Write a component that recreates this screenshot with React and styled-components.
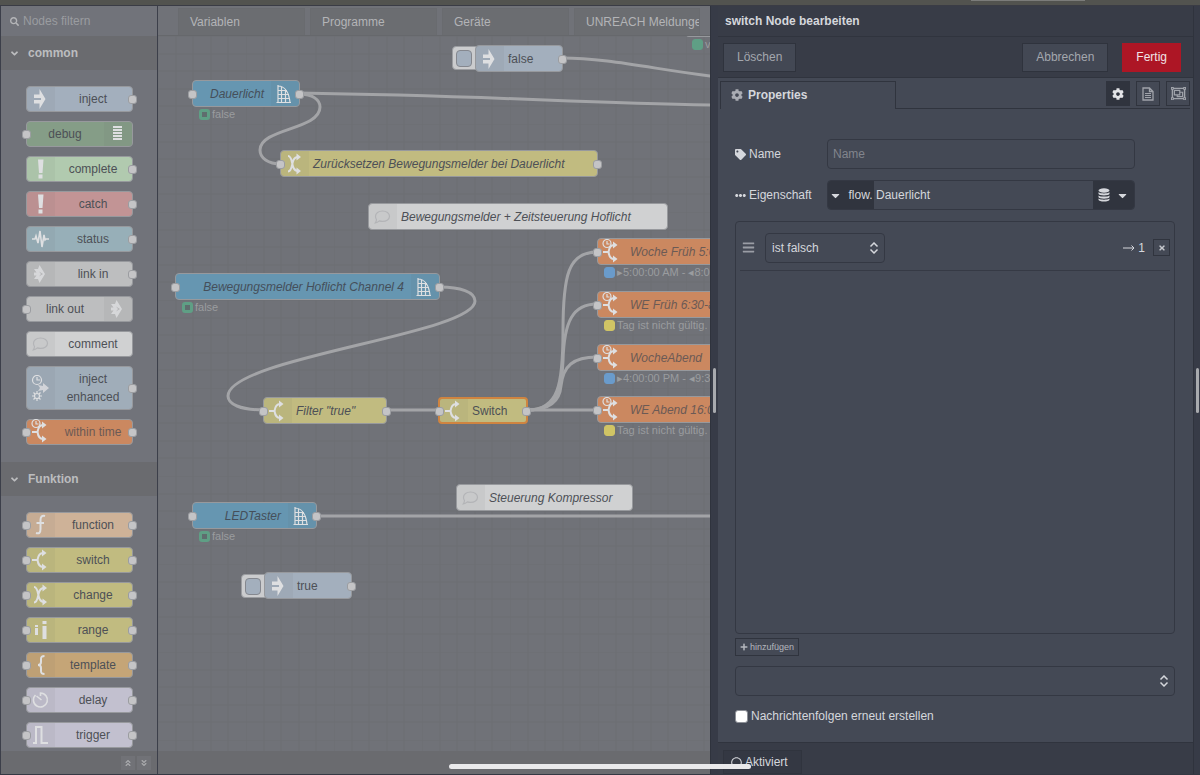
import React from 'react'
import styled, { createGlobalStyle } from 'styled-components'
import {
  FaSearch, FaAngleDown, FaAngleDoubleUp, FaAngleDoubleDown, FaCog, FaTag, FaEllipsisH,
  FaCaretDown, FaBars, FaPlus, FaTimes, FaRegObjectGroup, FaRegCircle,
} from 'react-icons/fa'

const GlobalStyle = createGlobalStyle`
  * { box-sizing: border-box; }
  body {
    margin: 0;
    background: #383c47;
    font-family: "Liberation Sans", Arial, sans-serif;
    font-size: 12px;
  }
  button, input, select { font: inherit; color: inherit; margin: 0; }
`

const Page = styled.div`
  display: flex;
  flex-direction: column;
  height: 100vh;
  min-height: 600px;
  overflow: hidden;
`
const TopStrip = styled.div`
  display: flex;
  justify-content: flex-end;
  flex: none;
  height: 6px;
  padding-right: 115px;
  background: #52534f;
  border-bottom: 1px solid #3a3c45;
`
const StripMark = styled.div`
  width: 114px;
  height: 1px;
  background: #7b7c7a;
`
const Main = styled.div`
  display: flex;
  flex: 1;
  min-height: 0;
  border-bottom: 1px solid #343843;
`

/* palette */
const Palette = styled.aside`
  display: flex;
  flex-direction: column;
  flex: none;
  width: 158px;
  background: #71737a;
  border-left: 1px solid #3c3f4a;
  border-right: 1px solid #3c3f4a;
`
const Search = styled.label`
  display: flex;
  align-items: center;
  gap: 4px;
  height: 30px;
  padding-left: 9px;
  color: #b4b5b8;
`
const SearchInput = styled.input`
  width: 120px;
  padding: 0;
  border: 0;
  outline: 0;
  background: transparent;
  &::placeholder { color: #9a9ca0; opacity: 1; }
`
const CategoryTitle = styled.button`
  display: flex;
  align-items: center;
  gap: 8px;
  width: 100%;
  height: 34px;
  padding: 0 0 0 8px;
  border: 0;
  background: #6a6b6f;
  color: #bcbdbf;
  font-weight: bold;
`
const CategoryNodes = styled.div`
  display: flex;
  flex-direction: column;
  align-items: center;
  gap: 9px;
  padding: 16px 0 17px;
`
const PaletteScroll = styled.div`
  flex: 1;
  min-height: 0;
  overflow: hidden;
`
const Footer = styled.div`
  display: flex;
  flex: none;
  align-items: center;
  justify-content: flex-end;
  gap: 2px;
  height: 23px;
  padding-right: 6px;
  background: #6a6b6f;
`
const TinyButton = styled.button`
  display: flex;
  align-items: center;
  justify-content: center;
  width: 14px;
  height: 14px;
  padding: 0;
  border: 0;
  background: #717277;
  color: #a9aaad;
  font-size: 8px;
`

/* nodes */
const NodeBox = styled.div`
  position: relative;
  display: flex;
  flex-direction: ${p => (p.$right ? 'row-reverse' : 'row')};
  width: 107px;
  height: ${p => (p.$tall ? '44px' : '26px')};
  border: 1px solid #97999d;
  border-radius: 4px;
  background: ${p => p.$color};
  color: ${p => p.$ink || '#4d5056'};
`
const IconBox = styled.div`
  display: flex;
  align-items: center;
  justify-content: center;
  flex: none;
  width: 28px;
  background: ${p => (p.$plain ? 'none' : 'rgba(80, 80, 80, 0.06)')};
`
const NodeLabel = styled.div`
  flex: 1;
  align-self: center;
  line-height: 18px;
  text-align: center;
`
const Port = styled.span`
  position: absolute;
  top: calc(50% - 4px);
  ${p => (p.$out ? 'right' : 'left')}: -5px;
  width: 9px;
  height: 9px;
  border: 1px solid #9b9da1;
  border-radius: 3px;
  background: #c4c4c6;
`
const FlowNodeBox = styled(NodeBox)`
  position: absolute;
  left: ${p => p.$x}px;
  top: ${p => p.$y}px;
  width: ${p => p.$w}px;
  height: 27px;
  border-color: ${p => (p.$selected ? '#cf8440' : '#97999d')};
  border-width: ${p => (p.$selected ? '2px' : '1px')};
`
const FlowLabel = styled.div`
  flex: 1;
  align-self: center;
  padding: ${p => (p.$end ? '0 7px' : '0 4px')};
  text-align: ${p => (p.$end ? 'right' : 'left')};
  font-style: ${p => (p.$italic ? 'italic' : 'normal')};
  white-space: nowrap;
`
const Status = styled.div`
  position: absolute;
  left: 6px;
  top: 27px;
  display: flex;
  align-items: center;
  gap: 2px;
  color: #9a9c9f;
  font-size: 11px;
  line-height: 13px;
  white-space: nowrap;
`
const StatusDot = styled.span`
  width: 11px;
  height: 11px;
  border: ${p => (p.$ring ? 3 : 1)}px solid ${p => p.$color};
  border-radius: 3px;
  background: ${p => (p.$ring ? '#5f6d6e' : p.$color)};
`
const InjectButton = styled.button`
  position: absolute;
  left: ${p => p.$x}px;
  top: ${p => p.$y}px;
  width: 28px;
  height: 24px;
  padding: 2px 3px;
  border: 1px solid #9b9da1;
  border-radius: 4px;
  background: #cbccce;
`
const InjectFace = styled.span`
  display: block;
  width: 16px;
  height: 17px;
  border: 1px solid #85888f;
  border-radius: 4px;
  background: #a3afbd;
`

/* workspace */
const Workspace = styled.main`
  display: flex;
  flex-direction: column;
  flex: 1;
  min-width: 0;
  background: #707278;
`
const TabBar = styled.div`
  display: flex;
  align-items: flex-end;
  gap: 5px;
  flex: none;
  height: 30px;
  padding: 0 10px 0 20px;
  overflow: hidden;
  border-bottom: 1px solid #66686c;
`
const FlowTab = styled.button`
  flex: 0 0 127px;
  height: 27px;
  padding: 0 0 0 11px;
  border: 1px solid #696b6f;
  border-bottom: 0;
  background: #6b6d71;
  color: #b3b4b7;
  text-align: left;
  white-space: nowrap;
  overflow: hidden;
  &:last-child { flex: 0 1 127px; }
`
const Canvas = styled.div`
  position: relative;
  flex: 1;
  min-height: 0;
  overflow: hidden;
`
const Wires = styled.svg`
  display: block;
  width: 100%;
  height: 100%;
`

/* tray */
const Separator = styled.div`
  display: flex;
  align-items: center;
  justify-content: center;
  flex: none;
  width: ${p => p.$w}px;
  border-left: 1px solid #2f333d;
  background: #373b47;
`
const Grip = styled.span`
  width: 3px;
  height: 45px;
  border-radius: 2px;
  background: #a8aaae;
`
const Tray = styled.section`
  display: flex;
  flex-direction: column;
  flex: none;
  width: 475px;
  background: #444955;
  color: #d5d7dc;
`
const TrayTitle = styled.h2`
  flex: none;
  height: 31px;
  margin: 0;
  padding-left: 7px;
  border-bottom: 1px solid #30343e;
  background: #383c47;
  font-size: 12px;
  line-height: 30px;
`
const TrayButtons = styled.div`
  display: flex;
  align-items: center;
  flex: none;
  gap: 14px;
  height: 41px;
  padding: 0 12px 0 5px;
  border-bottom: 1px solid #30343e;
  background: #383c47;
`
const Button = styled.button`
  height: 29px;
  padding: 0 13px;
  border: 1px solid ${p => (p.$primary ? '#ad1625' : '#2f333d')};
  background: ${p => (p.$primary ? '#ad1625' : '#434854')};
  color: ${p => (p.$primary ? '#f0e4e6' : '#a4a7ae')};
  &:first-child { margin-right: auto; }
`
const TrayTabs = styled.div`
  display: flex;
  flex: none;
  gap: 6px;
  height: 31px;
  padding: 3px 3px 0 2px;
`
const PropertiesTab = styled.button`
  display: flex;
  align-items: center;
  gap: 5px;
  width: 176px;
  padding: 0 0 2px 10px;
  border: 1px solid #30343e;
  border-bottom: 0;
  background: none;
  font-weight: bold;
  svg { color: #a9acb3; }
`
const TabRest = styled.div`
  display: flex;
  flex: 1;
  justify-content: flex-end;
  gap: 6px;
  margin-left: -6px;
  border-bottom: 1px solid #30343e;
`
const TabIcon = styled.button`
  display: flex;
  align-items: center;
  justify-content: center;
  width: 24px;
  height: 25px;
  padding: 0;
  border: 1px solid #30343e;
  background: ${p => (p.$active ? '#30343e' : 'none')};
  color: ${p => (p.$active ? '#e3e4e7' : '#a0a3aa')};
`
const Form = styled.form`
  display: flex;
  flex-direction: column;
  flex: 1;
  min-height: 0;
  gap: 11px;
  padding: 30px 18px 17px 17px;
`
const FormRow = styled.div`
  display: flex;
  align-items: center;
  justify-content: space-between;
  width: calc(100% - 40px);
  height: 30px;
`
const FieldLabel = styled.label`
  display: flex;
  align-items: center;
  gap: 3px;
`
const TextInput = styled.input`
  width: 308px;
  height: 30px;
  padding: 0 5px;
  border: 1px solid #343843;
  border-radius: 4px;
  outline: 0;
  background: none;
  &::placeholder { color: #82858d; opacity: 1; }
`
const TypedInput = styled.div`
  display: flex;
  width: 308px;
  height: 30px;
  border: 1px solid #343843;
  border-radius: 4px;
  overflow: hidden;
`
const TypeButton = styled.button`
  display: flex;
  align-items: center;
  justify-content: center;
  gap: 6px;
  flex: none;
  width: ${p => p.$w}px;
  padding: 0;
  border: 0;
  background: #30343e;
`
const TypedValue = styled.input`
  flex: 1;
  min-width: 0;
  padding: 0 2px;
  border: 0;
  outline: 0;
  background: none;
`
const Rules = styled.ul`
  flex: 1;
  min-height: 0;
  margin: 0;
  padding: 3px 4px;
  border: 1px solid #343843;
  border-radius: 4px;
  list-style: none;
`
const Rule = styled.li`
  display: flex;
  align-items: center;
  height: 46px;
  padding-left: 2px;
  border-bottom: 1px solid #363a45;
  color: #9a9da5;
`
const RuleTarget = styled.span`
  display: flex;
  align-items: center;
  gap: 3px;
  margin: 0 8px 0 auto;
  color: #d5d7dc;
`
const RemoveButton = styled.button`
  display: flex;
  align-items: center;
  justify-content: center;
  width: 17px;
  height: 17px;
  padding: 0;
  border: 1px solid #30343e;
  background: none;
  color: #c6c8cd;
  font-size: 8px;
`
const SelectWrap = styled.div`
  display: grid;
  align-items: center;
  flex: none;
  width: ${p => p.$w};
  margin-left: ${p => (p.$rule ? '10px' : '0')};
  color: #d5d7dc;
  > * { grid-area: 1 / 1; }
  > svg { justify-self: end; margin-right: 6px; pointer-events: none; }
`
const Select = styled.select`
  width: 100%;
  height: 30px;
  padding: 0 6px;
  border: 1px solid #343843;
  border-radius: 4px;
  appearance: none;
  outline: 0;
  background: none;
`
const AddRow = styled.div`
  display: flex;
  flex: none;
  margin: -7px 0 -1px;
`
const AddButton = styled.button`
  display: flex;
  align-items: center;
  gap: 2px;
  height: 18px;
  padding: 0 4px;
  border: 1px solid #30343e;
  background: none;
  color: #b4b7bd;
  font-size: 9px;
`
const CheckLabel = styled.label`
  display: flex;
  align-items: center;
  gap: 3px;
  height: 18px;
`
const Check = styled.input`
  appearance: none;
  width: 13px;
  height: 13px;
  border: 1px solid #8d9097;
  border-radius: 3px;
  background: #fff;
`
const TrayFooter = styled.div`
  flex: none;
  height: 32px;
  padding: 7px 5px 0;
  border-top: 1px solid #30343e;
  background: #383c47;
`
const EnableButton = styled.button`
  display: flex;
  align-items: center;
  gap: 3px;
  width: 79px;
  height: 24px;
  padding: 0 7px;
  border: 1px solid #30343e;
  background: #343843;
`
const HomeBar = styled.div`
  position: fixed;
  left: 50%;
  bottom: 6px;
  width: 302px;
  height: 5px;
  margin-left: -151px;
  border-radius: 3px;
  background: #e9e9eb;
`

const line = { fill: 'none', stroke: '#dedfe1', strokeWidth: 2 }
const thin = { fill: 'none', stroke: '#dedfe1', strokeWidth: 1.2 }

const fork = (
  <>
    <path {...line} d="M5 13h5M16 6c-4 0-5 3.500-5.500 7 .5 3.500 1.500 7 5.500 7" />
    <path d="M15 2.500l4.500 3.500-4.500 3.500zM15 16.500l4.500 3.500-4.500 3.500z" />
  </>
)
const clock = (
  <>
    <circle {...thin} cx="9" cy="4.500" r="4" />
    <path {...thin} d="M9 2v3h2.500" />
  </>
)

const icons = {
  inject: <path d="M7 8.500h5.500V3l6 10-6 10v-5.500H7V14h7v-2H7z" />,
  debug: <path d="M9 5h9v2H9zM9 8h9v2H9zM9 11h9v2H9zM9 14h9v2H9zM9 17h9v2H9z" />,
  alert: <path d="M11 3.500h5.500L15.500 17H12zM11.500 18.500h4v4h-4z" />,
  status: <path {...thin} strokeWidth="1.600" d="M5 13h3l1-3 2 7 2-12 2 16 2-12 1 5 1-1h3" />,
  link: <path opacity=".8" d="M7 8h4l1.500-4L18 13l-5.500 9L11 18H7l2.500-3.500H7v-3h2.500zM12 10.500l2 2.500-2 2.500 4-2.500z" />,
  comment: <path fill="none" stroke="#b3b4b7" strokeWidth="1.200" d="M13.500 7c4 0 7 2.200 7 5.200s-3 5.200-7 5.200c-1.200 0-2.200-.2-3.200-.5-1 .9-2.300 1.700-4 1.900.8-1 1.200-1.900 1.200-3.200-.7-1-1-2.100-1-3.400 0-3 3-5.200 7-5.200z" />,
  enhanced: (
    <>
      <circle {...thin} cx="10" cy="5" r="4.500" />
      <path {...thin} d="M10 2v3h3" />
      <path d="M11 10l5 1V8l6 5-6 5v-3l-5 1 2-3z" opacity=".8" />
      <circle {...thin} cx="10" cy="21" r="2.500" />
      <path {...thin} d="M10 16v2M10 24v2M5 21h2M13 21h2M6.500 17.500l1.500 1.500M12 23l1.500 1.500M6.500 24.500L8 23M12 19l1.500-1.500" />
    </>
  ),
  within: <>{fork}{clock}</>,
  switch: fork,
  change: (
    <>
      <path {...line} d="M7 5c6 0 2 15 10 15M7 20.500c6 0 2-14.500 10-14.500" />
      <path d="M15.500 2.500L20 6l-4.500 3.500zM15.500 16.500L20 20l-4.500 3.500z" />
    </>
  ),
  fn: <path {...line} d="M18 4c-3-1-4.500 1-4.500 4v9c0 4-1.500 5-4.500 4M9.500 11H17" />,
  range: <path d="M8 8h3v2H8zM8 11h3v7H8zM15.500 4h4v3h-4zM15.500 9h4v13h-4z" />,
  template: <path {...line} d="M17.500 4c-3 0-3.500 1-3.500 3v3c0 2-1 3-3 3 2 0 3 1 3 3v3c0 2 .5 3 3.500 3" />,
  delay: <path {...line} strokeWidth="1.600" d="M8.500 8a7 7 0 1 0 5-2v3M9.500 9l5 4" />,
  trigger: <path {...line} d="M6 21h3V5h5.500v16H21" />,
  device: <path {...thin} d="M7 4v18M7 5c7 0 11 7 12 16.500M5.500 21.500h14.500M10.500 6v15.500M14.500 8v13.500M7 9.500h9M7 13.500h11M7 17.500h11" />,
}

const Glyph = ({ name }) => (
  <svg width="28" height="26" viewBox="0 0 28 26" fill="#dedfe1" aria-hidden="true">
    {icons[name]}
  </svg>
)

const UpDown = () => (
  <svg width="10" height="12" viewBox="0 0 10 12" fill="none" stroke="#d5d7dc" strokeWidth="1.500">
    <path d="M1.500 4.500L5 1l3.500 3.500M1.500 7.500L5 11l3.500-3.500" />
  </svg>
)

const YELLOW = '#c1bb80'
const ORANGE = '#cb8860'
const BLUE = '#6696b1'

const common = [
  { label: 'inject', icon: 'inject', color: '#a3afbd', out: true },
  { label: 'debug', icon: 'debug', color: '#859d87', in: true, right: true },
  { label: 'complete', icon: 'alert', color: '#b1caaf', out: true },
  { label: 'catch', icon: 'alert', color: '#c29495', out: true },
  { label: 'status', icon: 'status', color: '#97afb8', out: true },
  { label: 'link in', icon: 'link', color: '#bdbebf', out: true },
  { label: 'link out', icon: 'link', color: '#bdbebf', in: true, right: true },
  { label: 'comment', icon: 'comment', color: '#d0d1d2' },
  { label: 'inject enhanced', icon: 'enhanced', color: '#a0adb9', out: true, tall: true },
  { label: 'within time', icon: 'within', color: ORANGE, in: true, out: true, ink: '#6b5a55' },
]
const funktion = [
  { label: 'function', icon: 'fn', color: '#ceb298' },
  { label: 'switch', icon: 'switch', color: YELLOW },
  { label: 'change', icon: 'change', color: YELLOW },
  { label: 'range', icon: 'range', color: YELLOW },
  { label: 'template', icon: 'template', color: '#c5a577' },
  { label: 'delay', icon: 'delay', color: '#c2c0cf' },
  { label: 'trigger', icon: 'trigger', color: '#c2c0cf' },
].map(n => ({ ...n, in: true, out: true }))

const flowNodes = [
  { x: 527, y: -26, w: 120, color: '#97999d', label: '', status: ['#5f9f85', 'verbunden'] },
  { x: 317, y: 9, w: 88, color: '#a3afbd', icon: 'inject', label: 'false', out: true },
  { x: 34, y: 44, w: 108, color: BLUE, icon: 'device', label: 'Dauerlicht', italic: true, right: true, in: true, out: true, ink: '#454f5a', status: ['#5f9f85', 'false', true] },
  { x: 122, y: 114, w: 318, color: YELLOW, icon: 'change', label: 'Zurücksetzen Bewegungsmelder bei Dauerlicht', italic: true, in: true, out: true },
  { x: 210, y: 167, w: 300, color: '#d0d1d2', icon: 'comment', label: 'Bewegungsmelder + Zeitsteuerung Hoflicht', italic: true },
  { x: 17, y: 237, w: 265, color: BLUE, icon: 'device', label: 'Bewegungsmelder Hoflicht Channel 4', italic: true, right: true, in: true, out: true, ink: '#454f5a', status: ['#5f9f85', 'false', true] },
  { x: 105, y: 361, w: 124, color: YELLOW, icon: 'switch', label: 'Filter "true"', italic: true, in: true, out: true },
  { x: 280, y: 361, w: 90, color: YELLOW, icon: 'switch', label: 'Switch', in: true, out: true, selected: true },
  { x: 439, y: 202, w: 190, color: ORANGE, icon: 'within', label: 'Woche Früh 5:00-8:00', italic: true, in: true, ink: '#6b5a55', status: ['#6a9bcb', '▸5:00:00 AM - ◂8:00:00 AM'] },
  { x: 439, y: 255, w: 190, color: ORANGE, icon: 'within', label: 'WE Früh 6:30-8:00', italic: true, in: true, ink: '#6b5a55', status: ['#d0c465', 'Tag ist nicht gültig.'] },
  { x: 439, y: 308, w: 190, color: ORANGE, icon: 'within', label: 'WocheAbend', italic: true, in: true, ink: '#6b5a55', status: ['#6a9bcb', '▸4:00:00 PM - ◂9:30:00 PM'] },
  { x: 439, y: 360, w: 190, color: ORANGE, icon: 'within', label: 'WE Abend 16:00-21:30', italic: true, in: true, ink: '#6b5a55', status: ['#d0c465', 'Tag ist nicht gültig.'] },
  { x: 34, y: 466, w: 125, color: BLUE, icon: 'device', label: 'LEDTaster', italic: true, right: true, in: true, out: true, ink: '#454f5a', status: ['#5f9f85', 'false', true] },
  { x: 298, y: 448, w: 177, color: '#d0d1d2', icon: 'comment', label: 'Steuerung Kompressor', italic: true },
  { x: 106, y: 536, w: 88, color: '#a3afbd', icon: 'inject', label: 'true', out: true },
]

const wires = [
  'M404 22C450 22 500 34 560 41',
  'M141 57C340 60 420 67 560 69',
  'M141 58C155 58 162 64 162 71C162 94 102 92 102 114C102 122 110 128 123 128',
  'M282 251C302 251 317 256 317 265C317 298 70 322 70 360C70 368 82 374 106 374',
  'M229 374H280',
  'M370 374C400 374 405 350 405 295C405 240 410 216 439 216',
  'M370 374C400 374 404 350 405 325C406 285 415 268 439 268',
  'M370 374C395 374 402 362 403 350C405 330 415 321 439 321',
  'M370 374H439',
  'M159 480H900',
]

const PaletteNode = ({ node }) => (
  <NodeBox $color={node.color} $tall={node.tall} $right={node.right} $ink={node.ink}>
    <IconBox $plain={node.icon === 'within'}><Glyph name={node.icon} /></IconBox>
    <NodeLabel>{node.label}</NodeLabel>
    {node.in && <Port />}
    {node.out && <Port $out />}
  </NodeBox>
)

const Category = ({ title, nodes }) => (
  <section>
    <CategoryTitle><FaAngleDown size={11} />{title}</CategoryTitle>
    <CategoryNodes>
      {nodes.map(n => <PaletteNode key={n.label} node={n} />)}
    </CategoryNodes>
  </section>
)

const FlowNode = ({ node }) => (
  <FlowNodeBox
    $x={node.x} $y={node.y} $w={node.w}
    $color={node.color} $right={node.right} $selected={node.selected} $ink={node.ink}
  >
    {node.icon && <IconBox $plain={node.icon === 'within'}><Glyph name={node.icon} /></IconBox>}
    <FlowLabel $italic={node.italic} $end={node.right}>{node.label}</FlowLabel>
    {node.in && <Port />}
    {node.out && <Port $out />}
    {node.status && (
      <Status>
        <StatusDot $color={node.status[0]} $ring={node.status[2]} />
        {node.status[1]}
      </Status>
    )}
  </FlowNodeBox>
)

const FlowCanvas = () => (
  <Canvas>
    <Wires>
      <defs>
        <pattern id="grid" width="88" height="88" patternUnits="userSpaceOnUse">
          <path d="M0 0V88M18 0V88M35 0V88M53 0V88M70 0V88M0 0H88M0 18H88M0 35H88M0 53H88M0 70H88" stroke="#6b6d72" />
        </pattern>
      </defs>
      <rect width="100%" height="100%" fill="url(#grid)" />
      {wires.map(d => <path key={d} d={d} fill="none" stroke="#a3a4a7" strokeWidth="3" />)}
    </Wires>
    <InjectButton $x={294} $y={10} aria-label="false"><InjectFace /></InjectButton>
    <InjectButton $x={83} $y={538} aria-label="true"><InjectFace /></InjectButton>
    {flowNodes.map((n, i) => <FlowNode key={i} node={n} />)}
  </Canvas>
)

const EditTray = () => (
  <Tray>
    <TrayTitle>switch Node bearbeiten</TrayTitle>
    <TrayButtons>
      <Button>Löschen</Button>
      <Button>Abbrechen</Button>
      <Button $primary>Fertig</Button>
    </TrayButtons>
    <TrayTabs>
      <PropertiesTab><FaCog size={12} />Properties</PropertiesTab>
      <TabRest>
        <TabIcon $active aria-label="Properties"><FaCog size={12} /></TabIcon>
        <TabIcon aria-label="Beschreibung">
          <svg width="12" height="14" viewBox="0 0 12 14" fill="none" stroke="currentColor">
            <path d="M1 1h6.500L11 4.500V13H1zM7.500 1v3.500H11" strokeWidth="1.300" />
            <path d="M3 6.500h6M3 8.500h6M3 10.500h6" />
          </svg>
        </TabIcon>
        <TabIcon aria-label="Aussehen"><FaRegObjectGroup size={15} /></TabIcon>
      </TabRest>
    </TrayTabs>
    <Form onSubmit={e => e.preventDefault()}>
      <FormRow>
        <FieldLabel htmlFor="name"><FaTag size={11} />Name</FieldLabel>
        <TextInput id="name" placeholder="Name" />
      </FormRow>
      <FormRow>
        <FieldLabel htmlFor="property"><FaEllipsisH size={11} />Eigenschaft</FieldLabel>
        <TypedInput>
          <TypeButton type="button" $w={46}><FaCaretDown size={13} />flow.</TypeButton>
          <TypedValue id="property" defaultValue="Dauerlicht" />
          <TypeButton type="button" $w={41} aria-label="Kontextspeicher">
            <svg width="12" height="14" viewBox="0 0 12 14" fill="#d5d7dc">
              <ellipse cx="6" cy="2.500" rx="5.500" ry="2.200" />
              <path d="M.5 4.200c2 1.600 9 1.600 11 0v1.600c0 2.200-11 2.200-11 0zM.5 7.400c2 1.600 9 1.600 11 0V9c0 2.200-11 2.200-11 0zM.5 10.600c2 1.600 9 1.600 11 0v1.200c0 2.400-11 2.400-11 0z" />
            </svg>
            <FaCaretDown size={13} />
          </TypeButton>
        </TypedInput>
      </FormRow>
      <Rules>
        <Rule>
          <FaBars size={13} />
          <SelectWrap $w="120px" $rule>
            <Select aria-label="Regel"><option>ist falsch</option></Select>
            <UpDown />
          </SelectWrap>
          <RuleTarget>
            <svg width="12" height="8" viewBox="0 0 12 8" fill="none" stroke="currentColor">
              <path d="M0 4h11M8.500 1.500L11 4 8.500 6.500" />
            </svg>
            1
          </RuleTarget>
          <RemoveButton type="button" aria-label="Entfernen"><FaTimes /></RemoveButton>
        </Rule>
      </Rules>
      <AddRow>
        <AddButton type="button"><FaPlus size={8} />hinzufügen</AddButton>
      </AddRow>
      <SelectWrap $w="100%">
        <Select aria-label="Modus" defaultValue=""><option value="" /></Select>
        <UpDown />
      </SelectWrap>
      <CheckLabel><Check type="checkbox" />Nachrichtenfolgen erneut erstellen</CheckLabel>
    </Form>
    <TrayFooter>
      <EnableButton><FaRegCircle size={11} />Aktiviert</EnableButton>
    </TrayFooter>
  </Tray>
)

const App = () => (
  <>
    <GlobalStyle />
    <Page>
      <TopStrip><StripMark /></TopStrip>
      <Main>
        <Palette>
          <Search>
            <FaSearch size={9} />
            <SearchInput placeholder="Nodes filtern" aria-label="Nodes filtern" />
          </Search>
          <PaletteScroll>
            <Category title="common" nodes={common} />
            <Category title="Funktion" nodes={funktion} />
          </PaletteScroll>
          <Footer>
            <TinyButton aria-label="Alle einklappen"><FaAngleDoubleUp /></TinyButton>
            <TinyButton aria-label="Alle ausklappen"><FaAngleDoubleDown /></TinyButton>
          </Footer>
        </Palette>
        <Workspace>
          <TabBar>
            <FlowTab>Variablen</FlowTab>
            <FlowTab>Programme</FlowTab>
            <FlowTab>Geräte</FlowTab>
            <FlowTab>UNREACH Meldungen</FlowTab>
          </TabBar>
          <FlowCanvas />
          <Footer />
        </Workspace>
        <Separator $w={8}><Grip /></Separator>
        <EditTray />
        <Separator $w={7}><Grip /></Separator>
      </Main>
      <HomeBar />
    </Page>
  </>
)

export default App
